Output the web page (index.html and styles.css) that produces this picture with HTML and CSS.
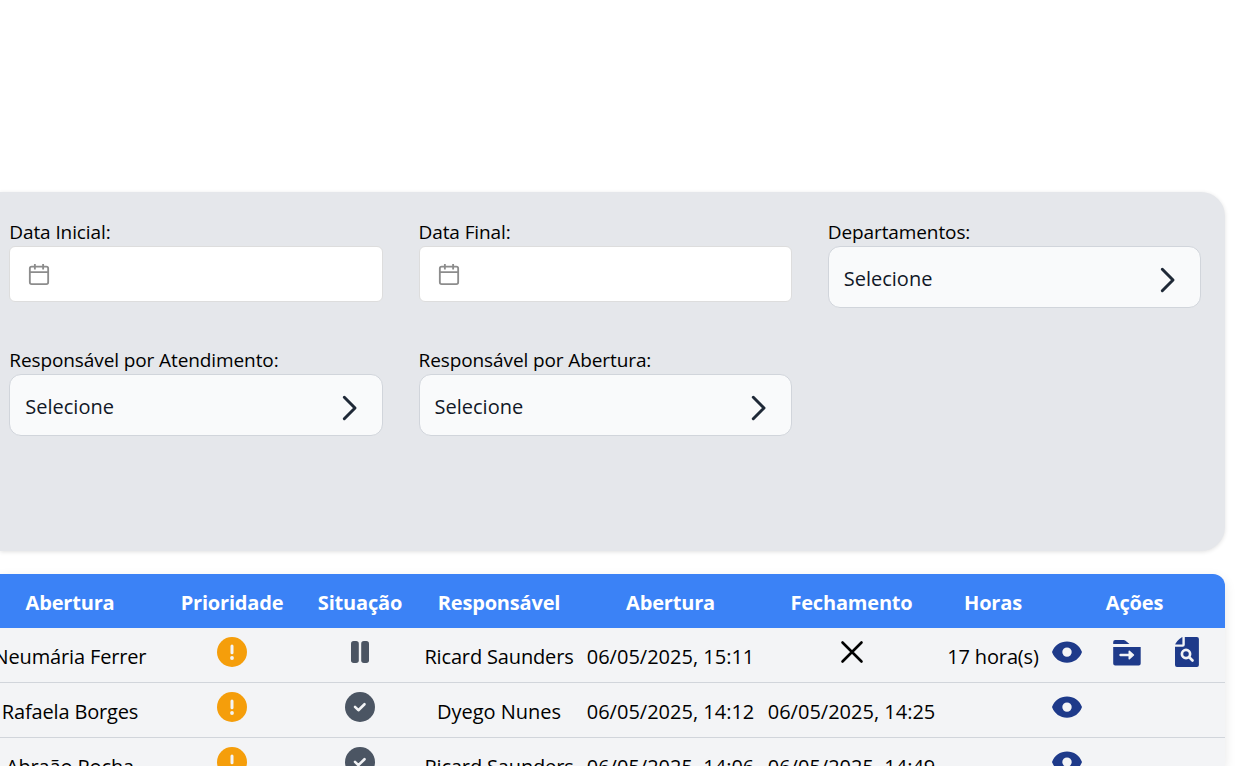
FILE: index.html
```html
<!DOCTYPE html>
<html lang="pt-BR">
<head>
<meta charset="utf-8">
<title>Chamados</title>
<link rel="stylesheet" href="styles.css">
</head>
<body>
<svg class="defs" width="0" height="0">
  <symbol id="calendar" viewBox="0 0 24 24"><g fill="none" stroke="#8c8c8c" stroke-width="2"><rect x="2" y="4" width="20" height="19" rx="2"/><path d="M2 10h20M7.5 1v6M16.5 1v6"/></g></symbol>
  <symbol id="chevron" viewBox="0 0 16 26"><path d="M2.3 2.3 13 13 2.3 23.7" fill="none" stroke="#1f2937" stroke-width="3" stroke-linecap="round" stroke-linejoin="round"/></symbol>
  <symbol id="alert" viewBox="0 0 30 30"><circle cx="15" cy="15" r="15" fill="#f59e0b"/><path d="M15 9v6.8" stroke="#f3f4f6" stroke-width="3" stroke-linecap="round"/><circle cx="15" cy="21" r="1.9" fill="#f3f4f6"/></symbol>
  <symbol id="pause" viewBox="0 0 30 30"><g fill="#4b5563"><rect x="6" y="4" width="7.8" height="22" rx="2.7"/><rect x="16.2" y="4" width="7.8" height="22" rx="2.7"/></g></symbol>
  <symbol id="check" viewBox="0 0 30 30"><circle cx="15" cy="15" r="15" fill="#4b5563"/><path d="m10 14.8 3.4 3.4 6.1-6" fill="none" stroke="#f3f4f6" stroke-width="2.6" stroke-linecap="round" stroke-linejoin="round"/></symbol>
  <symbol id="cross" viewBox="0 0 30 30"><path d="m5.5 5.5 19 19m0-19-19 19" stroke="#000" stroke-width="2.6" stroke-linecap="round"/></symbol>
  <symbol id="eye" viewBox="0 0 30 30"><path fill="#1e3a8a" fill-rule="evenodd" d="M15 4.4C8.300 4.400 2.400 8.200 0 15c2.400 6.800 8.300 10.700 15 10.700S27.600 21.800 30 15C27.600 8.200 21.700 4.400 15 4.400ZM15 10.400a4.700 4.700 0 1 1 0 9.400 4.700 4.700 0 0 1 0-9.400Z"/></symbol>
  <symbol id="folder" viewBox="0 0 30 30"><path fill="#1e3a8a" d="M1.200 7V5a2 2 0 0 1 2-2h8.300c.8 0 1.500.3 2 .8L17.500 7ZM1.200 10h27.500v16.500a2 2 0 0 1-2 2H3.200a2 2 0 0 1-2-2Z"/><path d="M8.500 18h10" fill="none" stroke="#f3f4f6" stroke-width="2.400" stroke-linecap="round"/><path d="m17.300 14.300 4.100 3.700-4.100 3.700Z" fill="#f3f4f6" stroke="#f3f4f6" stroke-width="1.600" stroke-linejoin="round"/></symbol>
  <symbol id="search-file" viewBox="0 0 30 30"><path fill="#1e3a8a" d="M10.400 0v7.400H3.200C4.500 4.500 8 1 10.400 0ZM12.800 0h12.100a2 2 0 0 1 2 2v26a2 2 0 0 1-2 2H5a2 2 0 0 1-2-2V9.800h7.800a2 2 0 0 0 2-2Z"/><g fill="none" stroke="#f3f4f6" stroke-width="2.700" stroke-linecap="round"><circle cx="14" cy="17" r="4.100"/><path d="m17.500 20.500 3 3"/></g></symbol>
</svg>

<section class="filters">
  <div class="field"><span class="label">Data Inicial:</span><div class="date"><svg><use href="#calendar"/></svg></div></div>
  <div class="field"><span class="label">Data Final:</span><div class="date"><svg><use href="#calendar"/></svg></div></div>
  <div class="field"><span class="label">Departamentos:</span><div class="select"><span>Selecione</span><svg><use href="#chevron"/></svg></div></div>
  <div class="field"><span class="label">Responsável por Atendimento:</span><div class="select"><span>Selecione</span><svg><use href="#chevron"/></svg></div></div>
  <div class="field"><span class="label">Responsável por Abertura:</span><div class="select"><span>Selecione</span><svg><use href="#chevron"/></svg></div></div>
</section>

<section class="table">
  <div class="row head"><span>Abertura</span><span>Prioridade</span><span>Situação</span><span>Responsável</span><span>Abertura</span><span>Fechamento</span><span>Horas</span><span>Ações</span></div>
  <div class="row">
    <span class="name">Neumária Ferrer</span><svg><use href="#alert"/></svg><svg><use href="#pause"/></svg><span class="name">Ricard Saunders</span><span>06/05/2025, 15:11</span><svg><use href="#cross"/></svg><span class="name">17 hora(s)</span>
    <div class="actions"><svg><use href="#eye"/></svg><svg><use href="#folder"/></svg><svg><use href="#search-file"/></svg></div>
  </div>
  <div class="row">
    <span class="name">Rafaela Borges</span><svg><use href="#alert"/></svg><svg><use href="#check"/></svg><span>Dyego Nunes</span><span>06/05/2025, 14:12</span><span>06/05/2025, 14:25</span><span></span>
    <div class="actions"><svg><use href="#eye"/></svg></div>
  </div>
  <div class="row">
    <span class="name">Abraão Rocha</span><svg><use href="#alert"/></svg><svg><use href="#check"/></svg><span class="name">Ricard Saunders</span><span>06/05/2025, 14:06</span><span>06/05/2025, 14:49</span><span></span>
    <div class="actions"><svg><use href="#eye"/></svg></div>
  </div>
</section>
</body>
</html>
```
FILE: styles.css
```css
* { box-sizing: border-box; }
html { overflow: hidden; }
body {
  margin: 0;
  padding-top: 192px;
  height: 766px;
  overflow: hidden;
  background: #fff;
  color: #000;
  font-family: "Open Sans", "Noto Sans", sans-serif;
  font-size: 20px;
}
.defs { position: absolute; }
svg { display: block; }

.filters {
  display: grid;
  grid-template-columns: repeat(3, 1fr);
  grid-auto-rows: 128px;
  column-gap: 36px;
  width: 1225px;
  height: 359px;
  padding: 26px 24px 0 9.3px;
  background: #e5e7eb;
  border-radius: 0 24px 24px 0;
  box-shadow: 0 1px 4px rgba(0, 0, 0, .12);
}
.label {
  display: block;
  height: 28px;
  line-height: 29px;
  font-size: 19px;
  letter-spacing: -.1px;
  white-space: nowrap;
}
.date {
  display: flex;
  align-items: center;
  height: 56px;
  padding: 0 0 1px 18px;
  background: #fff;
  border: 1px solid #ddd;
  border-radius: 6px;
}
.date svg { width: 22px; height: 24px; }
.select {
  display: flex;
  align-items: center;
  justify-content: space-between;
  height: 62px;
  padding: 2px 24px 0 15px;
  background: #f9fafb;
  border: 1px solid #d1d5db;
  border-radius: 12px;
  color: #111827;
}
.select svg { width: 16px; height: 26px; margin-top: 4px; }

.table {
  width: 1225px;
  height: 192px;
  margin-top: 23px;
  overflow: hidden;
  background: #f3f4f6;
  border-radius: 0 12px 0 0;
  box-shadow: 0 4px 12px rgba(0, 0, 0, .1);
}
.row {
  display: grid;
  grid-template-columns: 184px 140px 116px 162px 181px 181px 102px 181px;
  justify-items: center;
  width: 1247px;
  height: 55px;
  margin-left: -22px;
  border-bottom: 1px solid #d1d5db;
  line-height: 57px;
  white-space: nowrap;
}
.row svg { width: 30px; height: 30px; margin-top: 9px; }
.name { letter-spacing: -.15px; }
.head {
  height: 54px;
  border: 0;
  background: #3b82f6;
  color: #fff;
  font-weight: 700;
  letter-spacing: -.18px;
}
.actions { display: flex; gap: 30px; justify-self: start; margin-left: 8px; }
```
